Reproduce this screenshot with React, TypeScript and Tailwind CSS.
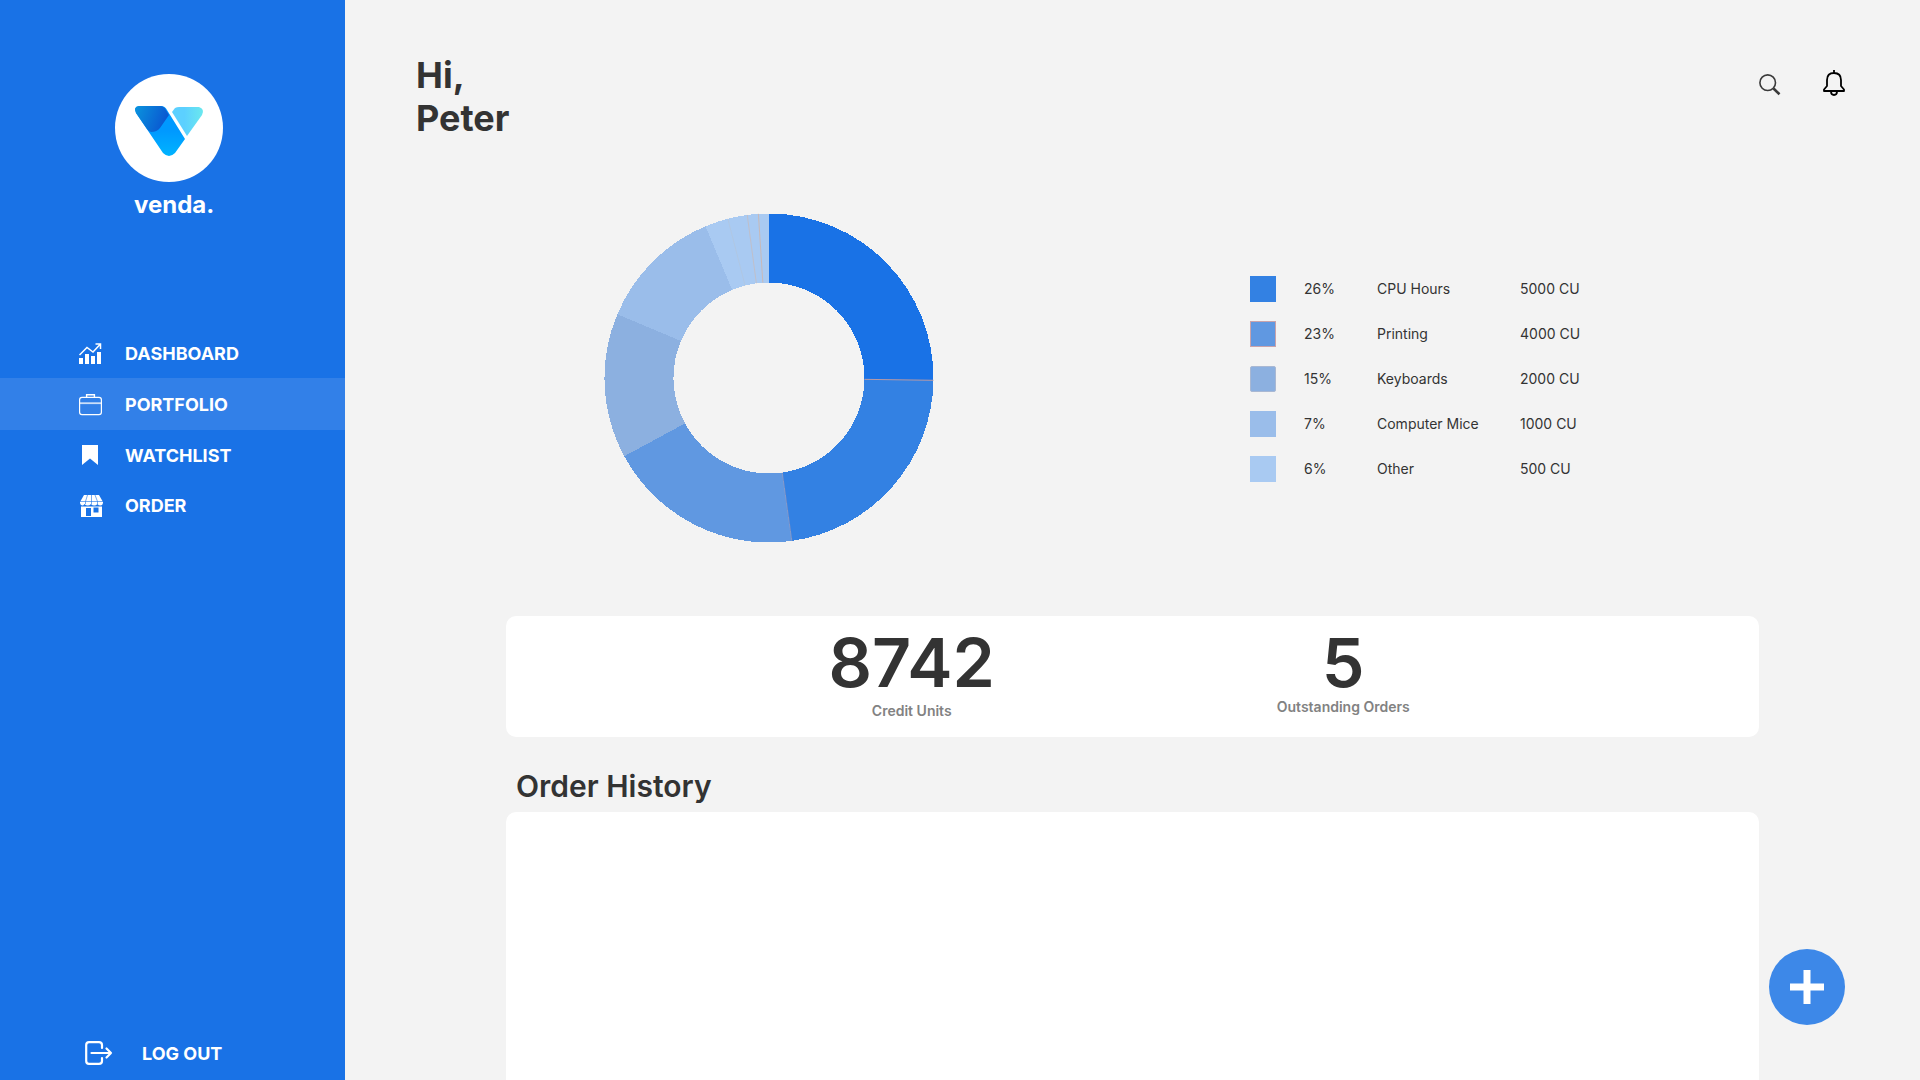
import React from "react";

const shares = [
  { from: 0, to: 90.8, color: "#1972e6" },
  { from: 90.8, to: 172, color: "#3381e3" },
  { from: 172, to: 241.6, color: "#6098e1" },
  { from: 241.6, to: 292.8, color: "#8cb0e0" },
  { from: 292.8, to: 337.3, color: "#9abdea" },
  { from: 337.3, to: 360, color: "#a9caf2" },
];

const hairlines = [
  { angle: 90.8, color: "#b99aa5", width: 1 },
  { angle: 172, color: "#a49bb5", width: 0.6 },
  { angle: 345.5, color: "#b4c4d8", width: 0.6 },
  { angle: 352.4, color: "#c5bcbf", width: 0.8 },
  { angle: 356.3, color: "#d0b5a8", width: 0.8 },
];

const legend = [
  { swatch: "bg-[#3381e3]", share: "26%", name: "CPU Hours", units: "5000 CU" },
  { swatch: "bg-[#6098e1] border border-[#c9a3ab]", share: "23%", name: "Printing", units: "4000 CU" },
  { swatch: "bg-[#8cb0e0] border border-[#a9b8d3] rounded-xs", share: "15%", name: "Keyboards", units: "2000 CU" },
  { swatch: "bg-[#9abdea]", share: "7%", name: "Computer Mice", units: "1000 CU" },
  { swatch: "bg-[#a9caf2]", share: "6%", name: "Other", units: "500 CU" },
];

const OUTER = 164.5;
const INNER = 95.5;
const C = 165;

function point(angle: number, r: number) {
  const a = ((angle - 90) * Math.PI) / 180;
  return [C + r * Math.cos(a), C + r * Math.sin(a)];
}

function arc(from: number, to: number) {
  const [x1, y1] = point(from, OUTER);
  const [x2, y2] = point(to, OUTER);
  const [x3, y3] = point(to, INNER);
  const [x4, y4] = point(from, INNER);
  return `M${x1} ${y1}A${OUTER} ${OUTER} 0 0 1 ${x2} ${y2}L${x3} ${y3}A${INNER} ${INNER} 0 0 0 ${x4} ${y4}Z`;
}

function Donut() {
  return (
    <svg className="size-[330px]" viewBox="0 0 330 330" role="img" aria-label="Portfolio breakdown">
      <g shapeRendering="crispEdges">
        {shares.map((s) => (
          <path key={s.from} d={arc(s.from, s.to)} fill={s.color} />
        ))}
      </g>
      {hairlines.map((h) => {
        const [x1, y1] = point(h.angle, INNER);
        const [x2, y2] = point(h.angle, OUTER);
        return <line key={h.angle} x1={x1} y1={y1} x2={x2} y2={y2} stroke={h.color} strokeWidth={h.width} />;
      })}
    </svg>
  );
}

function Logo() {
  return (
    <svg className="size-[108px]" viewBox="0 0 108 108" aria-hidden="true">
      <defs>
        <linearGradient id="dark" x1="0" y1="0.3" x2="1" y2="0.6">
          <stop offset="0" stopColor="#0a8fdc" />
          <stop offset="1" stopColor="#0a52d0" />
        </linearGradient>
        <linearGradient id="mid" x1="0" y1="0" x2="0" y2="1">
          <stop offset="0.5" stopColor="#0099ff" />
          <stop offset="1" stopColor="#00b4ff" />
        </linearGradient>
        <linearGradient id="light" x1="0" y1="0" x2="1" y2="0">
          <stop offset="0.4" stopColor="#5cd0ff" />
          <stop offset="1" stopColor="#6ae8ee" />
        </linearGradient>
      </defs>
      <circle cx="54" cy="54" r="54" fill="#fff" />
      <path d="M24 32H46Q50 32 52 36L70 65L60 79Q54 85 48 79L21 39Q18 33 24 32Z" fill="url(#mid)" />
      <path d="M24 32H45Q49 32 51 36L54 41L45 54Q42 58 36 58Q34 58 32 55L21 39Q18 33 24 32Z" fill="url(#dark)" />
      <path d="M57 38L60 34Q62 33 64 33H84Q90 35 87 41L72 62Z" fill="url(#light)" />
    </svg>
  );
}

function ChartIcon() {
  return (
    <svg className="h-[22px] w-6" viewBox="0 0 24 22" aria-hidden="true">
      <path d="M0 15h4v6H0zM6 11h4v10H6zM12 13h4v8h-4zM18 9h4v12h-4z" fill="#fff" />
      <path d="M.5 12L8 4.5L14 9L21 1.5M16.5 1H21.5V6" fill="none" stroke="#fff" strokeWidth="1.5" />
    </svg>
  );
}

function CaseIcon() {
  return (
    <svg className="h-[22px] w-6" viewBox="0 0 24 22" fill="none" stroke="#fff" aria-hidden="true">
      <rect x=".6" y="3.4" width="21.8" height="17.2" rx="2.4" strokeWidth="1.2" />
      <path d="M7.6 3V.8H15.4V3" strokeWidth="1.4" />
      <path d="M1 9.2H22" strokeWidth="1.8" opacity=".75" />
    </svg>
  );
}

function BookmarkIcon() {
  return (
    <svg className="h-[22px] w-6" viewBox="0 0 24 22" aria-hidden="true">
      <path d="M3 0H19V20L11 13.5L3 20Z" fill="#fff" />
    </svg>
  );
}

function ShopIcon() {
  return (
    <svg className="h-[22px] w-6" viewBox="0 0 24 22" aria-hidden="true">
      <path d="M5 0H20L24 7V8Q23.5 10.5 21.5 10.5Q19.5 10.5 18.5 9Q17 10.5 15.2 10.5Q13.3 10.5 12 9Q10.7 10.5 8.8 10.5Q7 10.5 5.5 9Q4.5 10.5 3.5 10.5Q1.5 10.5 1 8V7Z" fill="#fff" />
      <path d="M1 6.5H24M8.5 0L6.5 6.5V9M12.5 0V9M16 0L18.5 6.5V9" stroke="#1972e6" strokeWidth=".6" fill="none" />
      <path fillRule="evenodd" d="M2 11.5H23V22H2ZM7 13V21H12V13ZM14.5 12.5V17.5H19.5V12.5Z" fill="#fff" />
    </svg>
  );
}

function LogoutIcon() {
  return (
    <svg className="h-6 w-7" viewBox="0 0 28 24" fill="none" stroke="#fff" strokeWidth="2.2" strokeLinecap="round" strokeLinejoin="round" aria-hidden="true">
      <path d="M17 7V4Q17 1.2 14 1.2H4Q1.2 1.2 1.2 4V20Q1.2 22.8 4 22.8H14Q17 22.8 17 20V17" />
      <path d="M6.5 12H26M21.5 7.5L26 12L21.5 16.5" />
    </svg>
  );
}

const nav = [
  { label: "DASHBOARD", icon: <ChartIcon />, row: "h-[50px]" },
  { label: "PORTFOLIO", icon: <CaseIcon />, row: "h-[52px] bg-[#3280e8]" },
  { label: "WATCHLIST", icon: <BookmarkIcon />, row: "h-[50px]" },
  { label: "ORDER", icon: <ShopIcon />, row: "h-[50px]" },
];

function Sidebar() {
  return (
    <aside className="flex w-[345px] shrink-0 flex-col bg-[#1972e6] pt-[74px] text-white">
      <div className="pl-[115px]">
        <Logo />
        <p className="mt-[7px] pl-[19px] text-[24px] leading-8 font-bold">venda.</p>
      </div>
      <nav className="mt-[107px]" aria-label="Main">
        {nav.map((item) => (
          <a key={item.label} href="#" className={`flex items-center gap-[22px] pt-px pl-[79px] text-[18px] font-bold ${item.row}`}>
            {item.icon}
            {item.label}
          </a>
        ))}
      </nav>
      <button type="button" className="mt-auto mb-3 flex h-[30px] items-center gap-[29px] pl-[85px] text-[18px] font-bold">
        <LogoutIcon />
        LOG OUT
      </button>
    </aside>
  );
}

function Stat({ value, label, tight }: { value: string; label: string; tight?: boolean }) {
  return (
    <div className="flex flex-col items-center">
      <p className="text-[68px] leading-[70px] font-semibold text-[#333]">{value}</p>
      <p className={`text-[14px] leading-5 font-semibold text-[#828282] ${tight ? "" : "mt-1"}`}>{label}</p>
    </div>
  );
}

export default function App() {
  return (
    <div className="flex h-screen overflow-hidden bg-[#f3f3f3] font-['Inter',sans-serif] text-[#333]">
      <Sidebar />
      <main className="flex min-w-0 flex-1 flex-col">
        <header className="flex items-start justify-between pt-[54px] pr-[75px] pl-[71px]">
          <h1 className="text-[36px] leading-[43px] font-bold">
            Hi,
            <br />
            Peter
          </h1>
          <div className="flex items-end gap-[42px] pt-4">
            <button type="button" aria-label="Search">
              <svg className="size-[22px]" viewBox="0 0 22 22" fill="none" stroke="#3a3a3a" aria-hidden="true">
                <circle cx="8.7" cy="8.7" r="7.8" strokeWidth="1.6" />
                <path d="M14.5 14.5L20.5 20.2" strokeWidth="2.6" />
              </svg>
            </button>
            <button type="button" aria-label="Notifications">
              <svg className="h-[26px] w-[22px]" viewBox="0 0 22 26" fill="none" stroke="#000" strokeWidth="1.8" strokeLinejoin="round" aria-hidden="true">
                <path d="M11 0V3M4 16V10Q4 3 11 3Q18 3 18 10V16L21 19.5V21H1V19.5Z" />
                <path d="M8 21.5Q8 25 11 25Q14 25 14 21.5" />
              </svg>
            </button>
          </div>
        </header>

        <div className="flex min-h-0 flex-1 flex-col px-[161px] pt-[73px]">
          <section className="grid grid-cols-[744fr_509fr]">
            <div className="pl-[98px]">
              <Donut />
            </div>
            <table className="mt-[53px] w-[360px] self-start text-left text-[14px] leading-5">
              <tbody>
                {legend.map((l) => (
                  <tr key={l.name} className="h-[45px]">
                    <td className="w-[54px]">
                      <div className={`size-[26px] ${l.swatch}`} />
                    </td>
                    <td className="w-[73px]">{l.share}</td>
                    <td className="w-[143px]">{l.name}</td>
                    <td>{l.units}</td>
                  </tr>
                ))}
              </tbody>
            </table>
          </section>

          <section className="mt-[73px] grid h-[121px] shrink-0 grid-cols-2 items-start rounded-[10px] bg-white pt-[11px] pr-[200px] pl-[190px]">
            <Stat value="8742" label="Credit Units" />
            <Stat value="5" label="Outstanding Orders" tight />
          </section>

          <h2 className="mt-[29px] pl-[10px] text-[30px] leading-10 font-semibold">Order History</h2>
          <section aria-label="Order History" className="mt-[6px] flex-1 rounded-t-[10px] bg-white" />
        </div>
      </main>

      <button type="button" aria-label="Add order" className="fixed right-[75px] bottom-[55px] flex size-[76px] items-center justify-center rounded-full bg-[#3d88e8]">
        <svg className="size-[34px]" viewBox="0 0 34 34" aria-hidden="true">
          <path d="M17 0V34M0 17H34" stroke="#fff" strokeWidth="7" />
        </svg>
      </button>
    </div>
  );
}
